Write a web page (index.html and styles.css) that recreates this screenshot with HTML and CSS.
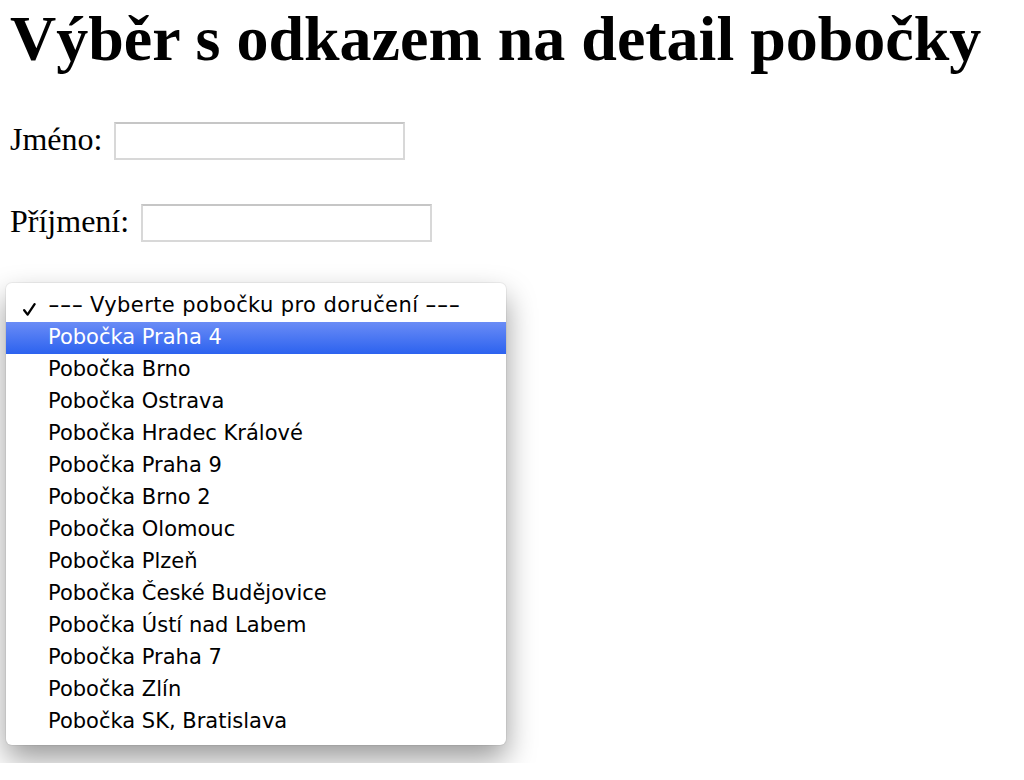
FILE: index.html
```html
<!DOCTYPE html>
<html lang="cs">
<head>
<meta charset="utf-8">
<title>Výběr s odkazem na detail pobočky</title>
<link rel="stylesheet" href="styles.css">
</head>
<body>
<h1 class="title">Výběr s odkazem na detail pobočky</h1>
<form class="form">
  <p class="row"><label>Jméno: <input class="field" type="text"></label></p>
  <p class="row"><label>Příjmení: <input class="field" type="text"></label></p>
  <div class="select-wrap">
    <ul class="menu">
      <li class="opt checked"><svg class="check" width="13" height="13" viewBox="0 0 13 13"><path d="M1.2 7.2 L4.6 11.6 L11.6 1.2" fill="none" stroke="#000" stroke-width="2.3" stroke-linejoin="round" stroke-linecap="round"/></svg><span class="dashes">---</span> Vyberte pobočku pro doručení <span class="dashes">---</span></li>
      <li class="opt active">Pobočka Praha 4</li>
      <li class="opt">Pobočka Brno</li>
      <li class="opt">Pobočka Ostrava</li>
      <li class="opt">Pobočka Hradec Králové</li>
      <li class="opt">Pobočka Praha 9</li>
      <li class="opt">Pobočka Brno 2</li>
      <li class="opt">Pobočka Olomouc</li>
      <li class="opt">Pobočka Plzeň</li>
      <li class="opt">Pobočka České Budějovice</li>
      <li class="opt">Pobočka Ústí nad Labem</li>
      <li class="opt">Pobočka Praha 7</li>
      <li class="opt">Pobočka Zlín</li>
      <li class="opt">Pobočka SK, Bratislava</li>
    </ul>
  </div>
</form>
</body>
</html>
```
FILE: styles.css
```css
html, body {
  margin: 0;
  background: #fff;
}
body {
  padding: 0 10px;
  font-family: "Liberation Serif", "Times New Roman", serif;
  font-size: 32px;
  color: #000;
}
.title {
  font-size: 64px;
  font-weight: bold;
  margin: 0;
  padding-top: 7px;
  line-height: 64px;
}
.form {
  margin: 0;
  padding-top: 29px;
}
.row {
  margin: 0;
  height: 82px;
  display: flex;
  align-items: center;
}
.field {
  width: 291px;
  height: 38px;
  box-sizing: border-box;
  border: 2px solid #d8d8d8;
  border-top-color: #c6c6c6;
  margin-left: 4px;
  vertical-align: middle;
  position: relative;
  top: -1px;
  font: inherit;
  background: #fff;
}
.select-wrap {
  position: relative;
  margin-top: 19px;
  height: 480px;
}
.menu {
  position: absolute;
  left: -4px;
  top: 0;
  width: 500px;
  margin: 0;
  padding: 7px 0;
  list-style: none;
  background: #fff;
  border-radius: 6px;
  box-shadow: 0 0 0 1px rgba(0,0,0,0.05), 0 14px 30px rgba(0,0,0,0.4);
  font-family: "DejaVu Sans", "Lucida Grande", sans-serif;
  font-size: 21px;
}
.opt {
  height: 32px;
  box-sizing: border-box;
  line-height: 30px;
  padding-left: 42px;
  position: relative;
  white-space: nowrap;
}
.checked {
  letter-spacing: 0.4px;
}
.check {
  position: absolute;
  left: 17px;
  top: 13px;
}
.dashes {
  display: inline-block;
  width: 35px;
  transform: scaleX(1.55);
  transform-origin: left center;
  letter-spacing: 0;
}
.active {
  color: #fff;
  background: linear-gradient(#6a8cf6, #2c62ef);
}
```
